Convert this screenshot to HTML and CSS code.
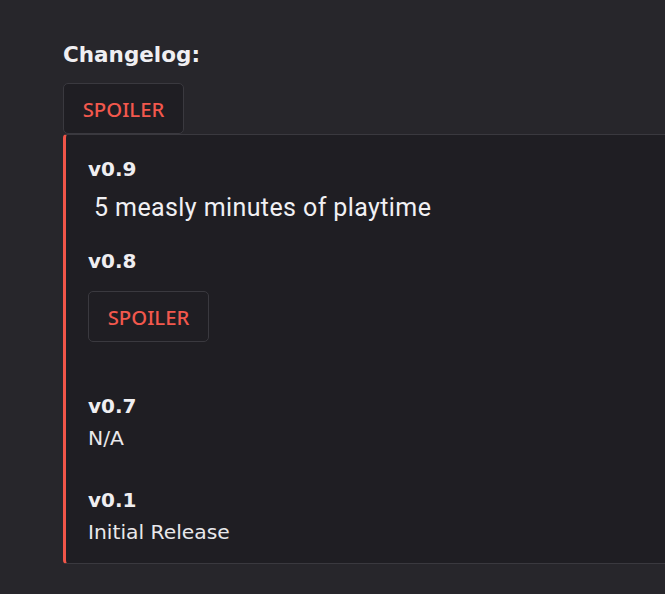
FILE: index.html
```html
<!DOCTYPE html>
<html>
<head>
<meta charset="utf-8">
<link rel="stylesheet" href="styles.css">
</head>
<body>
<main class="page">
  <h2 class="title">Changelog:</h2>
  <button class="spoiler">SPOILER</button>
  <section class="log">
    <h3 class="ver first">v0.9</h3>
    <p class="big">5 measly minutes of playtime</p>
    <h3 class="ver v08">v0.8</h3>
    <button class="spoiler inner">SPOILER</button>
    <h3 class="ver v07">v0.7</h3>
    <p class="note">N/A</p>
    <h3 class="ver v01">v0.1</h3>
    <p class="note">Initial Release</p>
  </section>
</main>
</body>
</html>
```

FILE: styles.css
```css
html, body {
  margin: 0;
  padding: 0;
  background: #27262b;
  overflow: hidden;
}
.page {
  padding: 42px 0 0 63px;
  display: flex;
  flex-direction: column;
  align-items: flex-start;
}
.title {
  margin: 0;
  font-family: "DejaVu Sans", sans-serif;
  font-weight: bold;
  font-size: 21.5px;
  line-height: 25px;
  color: #f0eff2;
}
.spoiler {
  margin: 16px 0 0 0;
  box-sizing: border-box;
  width: 121px;
  height: 51px;
  padding: 0;
  background: #1f1e23;
  border: 1px solid #3a393f;
  border-radius: 5px;
  font-family: "Noto Sans", sans-serif;
  font-weight: 500;
  font-size: 20.3px;
  color: #f2584d;
  display: flex;
  align-items: center;
  justify-content: center;
}
.log {
  align-self: stretch;
  box-sizing: border-box;
  background: #1f1e23;
  border-top: 1px solid #3a393f;
  border-bottom: 1px solid #3a393f;
  border-left: 3px solid #ef5549;
  border-radius: 4px 0 0 4px;
  padding: 22px 0 19px 22px;
  display: flex;
  flex-direction: column;
  align-items: flex-start;
}
.ver {
  margin: 0;
  font-family: "DejaVu Sans", sans-serif;
  font-weight: bold;
  font-size: 20px;
  line-height: 24px;
  color: #efeef1;
}
.big {
  margin: 12px 0 0 6px;
  font-family: Roboto, sans-serif;
  font-size: 25px;
  letter-spacing: 0.4px;
  line-height: 30px;
  color: #f1f0f3;
}
.v08 { margin-top: 26px; }
.inner { margin-top: 18px; }
.v07 { margin-top: 52px; }
.v01 { margin-top: 38px; }
.note {
  margin: 8px 0 0 0;
  font-family: "DejaVu Sans", sans-serif;
  font-size: 20.3px;
  line-height: 24px;
  color: #e9e8eb;
}
```
